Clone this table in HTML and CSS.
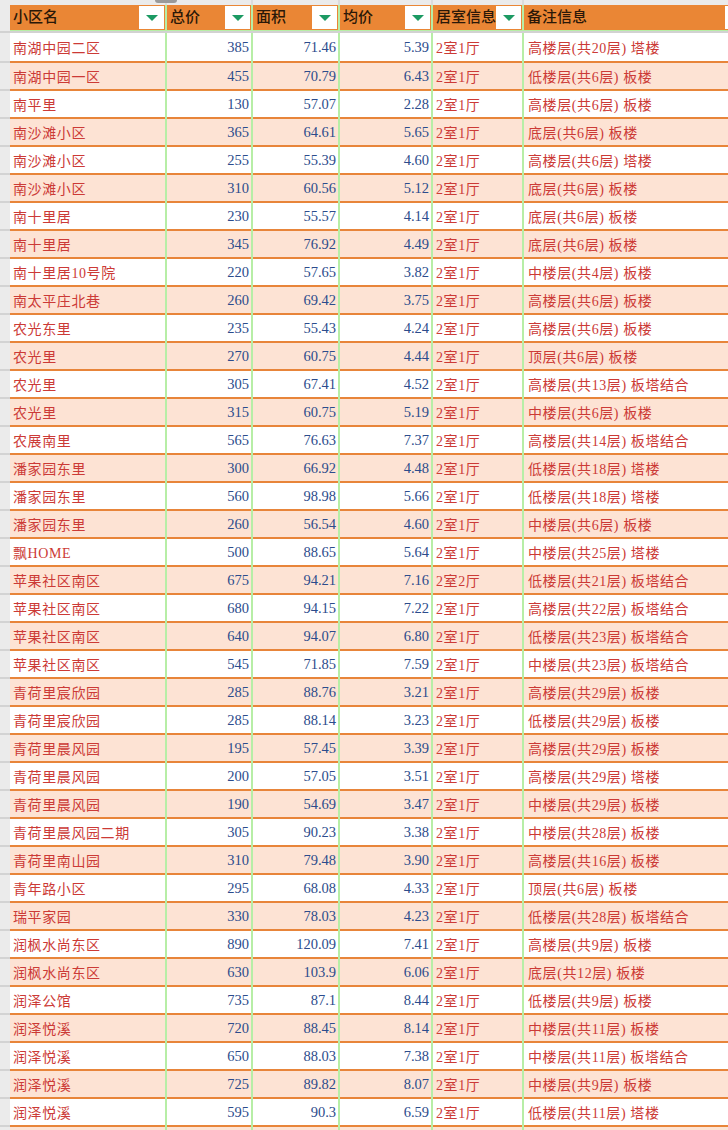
FILE: index.html
```html
<!DOCTYPE html>
<html lang="zh">
<head>
<meta charset="utf-8">
<title>房源表</title>
<link rel="stylesheet" href="styles.css">
</head>
<body>
<div class="sheet">
  <div class="letters">
    <div class="lg"></div>
    <div class="lc w1"><span class="grip"></span></div>
    <div class="lc w2"></div>
    <div class="lc w3"></div>
    <div class="lc w4"></div>
    <div class="lc w5"></div>
    <div class="lc w6"></div>
  </div>
  <div class="head">
    <div class="gut hg"></div>
    <div class="cells">
      <div class="h w1"><span class="ht">小区名</span><span class="dd"><i></i></span></div>
      <div class="h w2"><span class="ht">总价</span><span class="dd"><i></i></span></div>
      <div class="h w3"><span class="ht">面积</span><span class="dd"><i></i></span></div>
      <div class="h w4"><span class="ht">均价</span><span class="dd"><i></i></span></div>
      <div class="h w5"><span class="ht">居室信息</span><span class="dd"><i></i></span></div>
      <div class="h w6 last"><span class="ht">备注信息</span><span class="dd"><i></i></span></div>
    </div>
  </div>
  <div class="sep"></div>
  <div class="body">
    <div class="row first"><div class="gut"></div><div class="cells"><div class="c w1 t">南湖中园二区</div><div class="c w2 n">385</div><div class="c w3 n">71.46</div><div class="c w4 n">5.39</div><div class="c w5 t">2室1厅</div><div class="c w6 t r">高楼层(共20层) 塔楼</div></div></div>
    <div class="row alt"><div class="gut"></div><div class="cells"><div class="c w1 t">南湖中园一区</div><div class="c w2 n">455</div><div class="c w3 n">70.79</div><div class="c w4 n">6.43</div><div class="c w5 t">2室1厅</div><div class="c w6 t r">低楼层(共6层) 板楼</div></div></div>
    <div class="row"><div class="gut"></div><div class="cells"><div class="c w1 t">南平里</div><div class="c w2 n">130</div><div class="c w3 n">57.07</div><div class="c w4 n">2.28</div><div class="c w5 t">2室1厅</div><div class="c w6 t r">高楼层(共6层) 板楼</div></div></div>
    <div class="row alt"><div class="gut"></div><div class="cells"><div class="c w1 t">南沙滩小区</div><div class="c w2 n">365</div><div class="c w3 n">64.61</div><div class="c w4 n">5.65</div><div class="c w5 t">2室1厅</div><div class="c w6 t r">底层(共6层) 板楼</div></div></div>
    <div class="row"><div class="gut"></div><div class="cells"><div class="c w1 t">南沙滩小区</div><div class="c w2 n">255</div><div class="c w3 n">55.39</div><div class="c w4 n">4.60</div><div class="c w5 t">2室1厅</div><div class="c w6 t r">高楼层(共6层) 塔楼</div></div></div>
    <div class="row alt"><div class="gut"></div><div class="cells"><div class="c w1 t">南沙滩小区</div><div class="c w2 n">310</div><div class="c w3 n">60.56</div><div class="c w4 n">5.12</div><div class="c w5 t">2室1厅</div><div class="c w6 t r">底层(共6层) 板楼</div></div></div>
    <div class="row"><div class="gut"></div><div class="cells"><div class="c w1 t">南十里居</div><div class="c w2 n">230</div><div class="c w3 n">55.57</div><div class="c w4 n">4.14</div><div class="c w5 t">2室1厅</div><div class="c w6 t r">底层(共6层) 板楼</div></div></div>
    <div class="row alt"><div class="gut"></div><div class="cells"><div class="c w1 t">南十里居</div><div class="c w2 n">345</div><div class="c w3 n">76.92</div><div class="c w4 n">4.49</div><div class="c w5 t">2室1厅</div><div class="c w6 t r">底层(共6层) 板楼</div></div></div>
    <div class="row"><div class="gut"></div><div class="cells"><div class="c w1 t">南十里居10号院</div><div class="c w2 n">220</div><div class="c w3 n">57.65</div><div class="c w4 n">3.82</div><div class="c w5 t">2室1厅</div><div class="c w6 t r">中楼层(共4层) 板楼</div></div></div>
    <div class="row alt"><div class="gut"></div><div class="cells"><div class="c w1 t">南太平庄北巷</div><div class="c w2 n">260</div><div class="c w3 n">69.42</div><div class="c w4 n">3.75</div><div class="c w5 t">2室1厅</div><div class="c w6 t r">高楼层(共6层) 板楼</div></div></div>
    <div class="row"><div class="gut"></div><div class="cells"><div class="c w1 t">农光东里</div><div class="c w2 n">235</div><div class="c w3 n">55.43</div><div class="c w4 n">4.24</div><div class="c w5 t">2室1厅</div><div class="c w6 t r">高楼层(共6层) 板楼</div></div></div>
    <div class="row alt"><div class="gut"></div><div class="cells"><div class="c w1 t">农光里</div><div class="c w2 n">270</div><div class="c w3 n">60.75</div><div class="c w4 n">4.44</div><div class="c w5 t">2室1厅</div><div class="c w6 t r">顶层(共6层) 板楼</div></div></div>
    <div class="row"><div class="gut"></div><div class="cells"><div class="c w1 t">农光里</div><div class="c w2 n">305</div><div class="c w3 n">67.41</div><div class="c w4 n">4.52</div><div class="c w5 t">2室1厅</div><div class="c w6 t r">高楼层(共13层) 板塔结合</div></div></div>
    <div class="row alt"><div class="gut"></div><div class="cells"><div class="c w1 t">农光里</div><div class="c w2 n">315</div><div class="c w3 n">60.75</div><div class="c w4 n">5.19</div><div class="c w5 t">2室1厅</div><div class="c w6 t r">中楼层(共6层) 板楼</div></div></div>
    <div class="row"><div class="gut"></div><div class="cells"><div class="c w1 t">农展南里</div><div class="c w2 n">565</div><div class="c w3 n">76.63</div><div class="c w4 n">7.37</div><div class="c w5 t">2室1厅</div><div class="c w6 t r">高楼层(共14层) 板塔结合</div></div></div>
    <div class="row alt"><div class="gut"></div><div class="cells"><div class="c w1 t">潘家园东里</div><div class="c w2 n">300</div><div class="c w3 n">66.92</div><div class="c w4 n">4.48</div><div class="c w5 t">2室1厅</div><div class="c w6 t r">低楼层(共18层) 塔楼</div></div></div>
    <div class="row"><div class="gut"></div><div class="cells"><div class="c w1 t">潘家园东里</div><div class="c w2 n">560</div><div class="c w3 n">98.98</div><div class="c w4 n">5.66</div><div class="c w5 t">2室1厅</div><div class="c w6 t r">低楼层(共18层) 塔楼</div></div></div>
    <div class="row alt"><div class="gut"></div><div class="cells"><div class="c w1 t">潘家园东里</div><div class="c w2 n">260</div><div class="c w3 n">56.54</div><div class="c w4 n">4.60</div><div class="c w5 t">2室1厅</div><div class="c w6 t r">中楼层(共6层) 板楼</div></div></div>
    <div class="row"><div class="gut"></div><div class="cells"><div class="c w1 t">飘HOME</div><div class="c w2 n">500</div><div class="c w3 n">88.65</div><div class="c w4 n">5.64</div><div class="c w5 t">2室1厅</div><div class="c w6 t r">中楼层(共25层) 塔楼</div></div></div>
    <div class="row alt"><div class="gut"></div><div class="cells"><div class="c w1 t">苹果社区南区</div><div class="c w2 n">675</div><div class="c w3 n">94.21</div><div class="c w4 n">7.16</div><div class="c w5 t">2室2厅</div><div class="c w6 t r">低楼层(共21层) 板塔结合</div></div></div>
    <div class="row"><div class="gut"></div><div class="cells"><div class="c w1 t">苹果社区南区</div><div class="c w2 n">680</div><div class="c w3 n">94.15</div><div class="c w4 n">7.22</div><div class="c w5 t">2室1厅</div><div class="c w6 t r">高楼层(共22层) 板塔结合</div></div></div>
    <div class="row alt"><div class="gut"></div><div class="cells"><div class="c w1 t">苹果社区南区</div><div class="c w2 n">640</div><div class="c w3 n">94.07</div><div class="c w4 n">6.80</div><div class="c w5 t">2室1厅</div><div class="c w6 t r">低楼层(共23层) 板塔结合</div></div></div>
    <div class="row"><div class="gut"></div><div class="cells"><div class="c w1 t">苹果社区南区</div><div class="c w2 n">545</div><div class="c w3 n">71.85</div><div class="c w4 n">7.59</div><div class="c w5 t">2室1厅</div><div class="c w6 t r">中楼层(共23层) 板塔结合</div></div></div>
    <div class="row alt"><div class="gut"></div><div class="cells"><div class="c w1 t">青荷里宸欣园</div><div class="c w2 n">285</div><div class="c w3 n">88.76</div><div class="c w4 n">3.21</div><div class="c w5 t">2室1厅</div><div class="c w6 t r">高楼层(共29层) 板楼</div></div></div>
    <div class="row"><div class="gut"></div><div class="cells"><div class="c w1 t">青荷里宸欣园</div><div class="c w2 n">285</div><div class="c w3 n">88.14</div><div class="c w4 n">3.23</div><div class="c w5 t">2室1厅</div><div class="c w6 t r">低楼层(共29层) 板楼</div></div></div>
    <div class="row alt"><div class="gut"></div><div class="cells"><div class="c w1 t">青荷里晨风园</div><div class="c w2 n">195</div><div class="c w3 n">57.45</div><div class="c w4 n">3.39</div><div class="c w5 t">2室1厅</div><div class="c w6 t r">高楼层(共29层) 板楼</div></div></div>
    <div class="row"><div class="gut"></div><div class="cells"><div class="c w1 t">青荷里晨风园</div><div class="c w2 n">200</div><div class="c w3 n">57.05</div><div class="c w4 n">3.51</div><div class="c w5 t">2室1厅</div><div class="c w6 t r">高楼层(共29层) 塔楼</div></div></div>
    <div class="row alt"><div class="gut"></div><div class="cells"><div class="c w1 t">青荷里晨风园</div><div class="c w2 n">190</div><div class="c w3 n">54.69</div><div class="c w4 n">3.47</div><div class="c w5 t">2室1厅</div><div class="c w6 t r">中楼层(共29层) 板楼</div></div></div>
    <div class="row"><div class="gut"></div><div class="cells"><div class="c w1 t">青荷里晨风园二期</div><div class="c w2 n">305</div><div class="c w3 n">90.23</div><div class="c w4 n">3.38</div><div class="c w5 t">2室1厅</div><div class="c w6 t r">中楼层(共28层) 板楼</div></div></div>
    <div class="row alt"><div class="gut"></div><div class="cells"><div class="c w1 t">青荷里南山园</div><div class="c w2 n">310</div><div class="c w3 n">79.48</div><div class="c w4 n">3.90</div><div class="c w5 t">2室1厅</div><div class="c w6 t r">高楼层(共16层) 板楼</div></div></div>
    <div class="row"><div class="gut"></div><div class="cells"><div class="c w1 t">青年路小区</div><div class="c w2 n">295</div><div class="c w3 n">68.08</div><div class="c w4 n">4.33</div><div class="c w5 t">2室1厅</div><div class="c w6 t r">顶层(共6层) 板楼</div></div></div>
    <div class="row alt"><div class="gut"></div><div class="cells"><div class="c w1 t">瑞平家园</div><div class="c w2 n">330</div><div class="c w3 n">78.03</div><div class="c w4 n">4.23</div><div class="c w5 t">2室1厅</div><div class="c w6 t r">低楼层(共28层) 板塔结合</div></div></div>
    <div class="row"><div class="gut"></div><div class="cells"><div class="c w1 t">润枫水尚东区</div><div class="c w2 n">890</div><div class="c w3 n">120.09</div><div class="c w4 n">7.41</div><div class="c w5 t">2室1厅</div><div class="c w6 t r">高楼层(共9层) 板楼</div></div></div>
    <div class="row alt"><div class="gut"></div><div class="cells"><div class="c w1 t">润枫水尚东区</div><div class="c w2 n">630</div><div class="c w3 n">103.9</div><div class="c w4 n">6.06</div><div class="c w5 t">2室1厅</div><div class="c w6 t r">底层(共12层) 板楼</div></div></div>
    <div class="row"><div class="gut"></div><div class="cells"><div class="c w1 t">润泽公馆</div><div class="c w2 n">735</div><div class="c w3 n">87.1</div><div class="c w4 n">8.44</div><div class="c w5 t">2室1厅</div><div class="c w6 t r">低楼层(共9层) 板楼</div></div></div>
    <div class="row alt"><div class="gut"></div><div class="cells"><div class="c w1 t">润泽悦溪</div><div class="c w2 n">720</div><div class="c w3 n">88.45</div><div class="c w4 n">8.14</div><div class="c w5 t">2室1厅</div><div class="c w6 t r">中楼层(共11层) 板楼</div></div></div>
    <div class="row"><div class="gut"></div><div class="cells"><div class="c w1 t">润泽悦溪</div><div class="c w2 n">650</div><div class="c w3 n">88.03</div><div class="c w4 n">7.38</div><div class="c w5 t">2室1厅</div><div class="c w6 t r">中楼层(共11层) 板塔结合</div></div></div>
    <div class="row alt"><div class="gut"></div><div class="cells"><div class="c w1 t">润泽悦溪</div><div class="c w2 n">725</div><div class="c w3 n">89.82</div><div class="c w4 n">8.07</div><div class="c w5 t">2室1厅</div><div class="c w6 t r">中楼层(共9层) 板楼</div></div></div>
    <div class="row"><div class="gut"></div><div class="cells"><div class="c w1 t">润泽悦溪</div><div class="c w2 n">595</div><div class="c w3 n">90.3</div><div class="c w4 n">6.59</div><div class="c w5 t">2室1厅</div><div class="c w6 t r">低楼层(共11层) 塔楼</div></div></div>
    <div class="row alt"><div class="gut"></div><div class="cells"><div class="c w1 t"></div><div class="c w2 n"></div><div class="c w3 n"></div><div class="c w4 n"></div><div class="c w5 t"></div><div class="c w6 t r"></div></div></div>
  </div>
</div>
</body>
</html>
```

FILE: styles.css
```css
html, body {
  margin: 0;
  padding: 0;
  background: #ffffff;
  overflow: hidden;
}
.sheet {
  width: 760px;
  display: flex;
  flex-direction: column;
  font-family: "Liberation Serif", "Noto Sans CJK SC", serif;
}
.letters {
  display: flex;
  height: 5px;
  background: #ebebeb;
}
.lg { width: 10px; flex: none; }
.lc {
  flex: none;
  box-sizing: border-box;
  border-right: 2px solid #dcdcdc;
  position: relative;
}
.lc.w1 { width: 157px; }
.lc.w2 { width: 86px; }
.lc.w3 { width: 87px; }
.lc.w4 { width: 93px; }
.lc.w5 { width: 91px; }
.lc.w6 { width: 236px; border-right: none; }
.grip {
  position: absolute;
  right: -12px;
  top: 0;
  width: 22px;
  height: 3px;
  border-radius: 0 0 4px 4px;
  background: #9a9a9a;
  z-index: 2;
}
.head {
  display: flex;
  height: 26px;
}
.gut {
  width: 10px;
  flex: none;
  background: #ebebeb;
  box-sizing: border-box;
  border-bottom: 2px solid #d3d3d3;
}
.hg { border-bottom: none; }
.cells {
  flex: 1;
  display: flex;
  gap: 2px;
  background: #b7eea6;
}
.w1 { width: 155px; flex: none; }
.w2 { width: 84px; flex: none; }
.w3 { width: 85px; flex: none; }
.w4 { width: 91px; flex: none; }
.w5 { width: 89px; flex: none; }
.w6 { flex: 1; }
.h {
  height: 25px;
  background: #ea8635;
  display: flex;
  align-items: stretch;
  box-sizing: border-box;
  padding: 1px 1px 1px 0;
}
.h.last { padding-right: 10px; }
.ht {
  flex: 1;
  padding-left: 3px;
  font-size: 15px;
  line-height: 23px;
  color: #2a1808;
  font-weight: 500;
  white-space: nowrap;
  overflow: hidden;
}
.dd {
  width: 25px;
  flex: none;
  background: #ffffff;
  display: flex;
  align-items: center;
  justify-content: center;
}
.dd i {
  display: block;
  width: 0;
  height: 0;
  border-left: 6px solid transparent;
  border-right: 6px solid transparent;
  border-top: 6px solid #1c9a63;
  margin-top: 1px;
}
.sep {
  height: 2px;
  background: #d2d2d2;
}
.row {
  display: flex;
  height: 28px;
}
.row.first { height: 30px; }
.c {
  box-sizing: border-box;
  background: #ffffff;
  border-bottom: 2px solid #e8853a;
  font-size: 14px;
  white-space: nowrap;
  overflow: hidden;
  display: flex;
  align-items: center;
}
.row.alt .c { background: #fde3d4; }
.t {
  color: #cc3a36;
  padding-left: 3px;
  letter-spacing: 0.6px;
}
.r { padding-left: 4px; }
.n {
  color: #2c4c8c;
  justify-content: flex-end;
  padding-right: 2px;
  font-size: 14.5px;
}
```
